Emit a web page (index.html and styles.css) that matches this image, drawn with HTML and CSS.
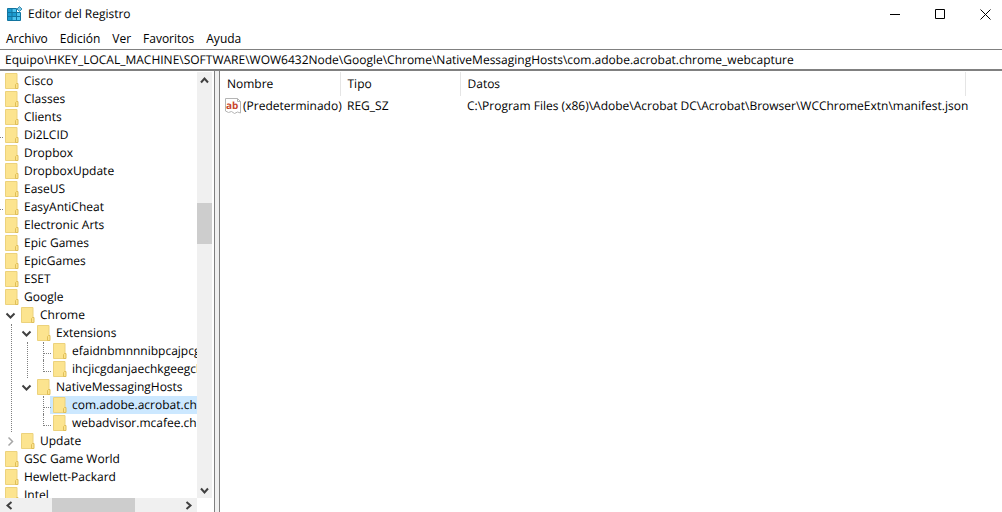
FILE: index.html
```html
<!DOCTYPE html>
<html lang="es">
<head>
    <meta charset="UTF-8">
    <meta name="viewport" content="width=device-width, initial-scale=1.0">
    <title>Editor del Registro</title>
    <link rel="stylesheet" href="styles.css">
</head>
<body>

    <svg class="defs" aria-hidden="true">
        <symbol id="folder" viewBox="0 0 14 16">
            <path d="M.5 .5h11.500v15h-11.500z" fill="#fce48f" stroke="#ecd27c"/>
            <path d="M10.500 15.500v-4l1-1h1.500v5z" fill="#fce48f" stroke="#e0bf58"/>
        </symbol>
        <symbol id="open" viewBox="0 0 11 11">
            <path d="M1.500 3.500l4 4 4-4" fill="none" stroke="#404040" stroke-width="2"/>
        </symbol>
        <symbol id="closed" viewBox="0 0 11 11">
            <path d="M3.500 1.500l4 4-4 4" fill="none" stroke="#a6a6a6" stroke-width="1.500"/>
        </symbol>
    </svg>

    <header class="titlebar">
        <svg class="app-icon" viewBox="0 0 16 16" aria-hidden="true">
            <path d="M.5 2.500h9v4h4v8h-13z" fill="#4cc3ee"/>
            <path d="M1 3h4v11h-4zM5 7h4v4h-4z" fill="#1c9bd0"/>
            <path d="M.5 2.500h9v4h4v8h-13zM5 2.500v12M9.500 6.500v8M.5 6.500h9M.5 10.500h13" fill="none" stroke="#12749f"/>
            <path d="M12.500 .5l2.500 2.500-2.500 2.500-2.500-2.500z" fill="#7cc6e2" stroke="#3b8fb5"/>
        </svg>
        <h1 class="title">Editor del Registro</h1>
        <div class="window-buttons">
            <button type="button" aria-label="Minimizar"><svg viewBox="0 0 11 11"><path d="M0 5.500h10"/></svg></button>
            <button type="button" aria-label="Maximizar"><svg viewBox="0 0 11 11"><path d="M.5 .5h9v9h-9z"/></svg></button>
            <button type="button" aria-label="Cerrar"><svg viewBox="0 0 11 11"><path d="M.5 .5l10 10M10.500 .5l-10 10"/></svg></button>
        </div>
    </header>

    <nav class="menu">
        <button type="button">Archivo</button>
        <button type="button">Edición</button>
        <button type="button">Ver</button>
        <button type="button">Favoritos</button>
        <button type="button">Ayuda</button>
    </nav>

    <input class="address" type="text" aria-label="Ruta" value="Equipo\HKEY_LOCAL_MACHINE\SOFTWARE\WOW6432Node\Google\Chrome\NativeMessagingHosts\com.adobe.acrobat.chrome_webcapture">

    <main class="panes">
        <section class="tree-pane">
            <div class="tree-view">
                <ul class="tree">
                    <li><a class="node" href="#"><svg><use href="#folder"/></svg><span>Cisco</span></a></li>
                    <li><a class="node" href="#"><svg><use href="#folder"/></svg><span>Classes</span></a></li>
                    <li><a class="node" href="#"><svg><use href="#folder"/></svg><span>Clients</span></a></li>
                    <li class="leaf"><a class="node" href="#"><svg><use href="#folder"/></svg><span>Di2LCID</span></a></li>
                    <li><a class="node" href="#"><svg><use href="#folder"/></svg><span>Dropbox</span></a></li>
                    <li><a class="node" href="#"><svg><use href="#folder"/></svg><span>DropboxUpdate</span></a></li>
                    <li><a class="node" href="#"><svg><use href="#folder"/></svg><span>EaseUS</span></a></li>
                    <li class="leaf"><a class="node" href="#"><svg><use href="#folder"/></svg><span>EasyAntiCheat</span></a></li>
                    <li><a class="node" href="#"><svg><use href="#folder"/></svg><span>Electronic Arts</span></a></li>
                    <li><a class="node" href="#"><svg><use href="#folder"/></svg><span>Epic Games</span></a></li>
                    <li><a class="node" href="#"><svg><use href="#folder"/></svg><span>EpicGames</span></a></li>
                    <li><a class="node" href="#"><svg><use href="#folder"/></svg><span>ESET</span></a></li>
                    <li><a class="node" href="#"><svg><use href="#folder"/></svg><span>Google</span></a>
                        <ul>
                            <li class="branch">
                                <button class="toggle" type="button" aria-label="Contraer"><svg><use href="#open"/></svg></button>
                                <a class="node" href="#"><svg><use href="#folder"/></svg><span>Chrome</span></a>
                                <ul>
                                    <li class="branch">
                                        <button class="toggle" type="button" aria-label="Contraer"><svg><use href="#open"/></svg></button>
                                        <a class="node" href="#"><svg><use href="#folder"/></svg><span>Extensions</span></a>
                                        <ul>
                                            <li class="leaf"><a class="node" href="#"><svg><use href="#folder"/></svg><span>efaidnbmnnnibpcajpcglclefindmkaj</span></a></li>
                                            <li class="leaf"><a class="node" href="#"><svg><use href="#folder"/></svg><span>ihcjicgdanjaechkgeegckofjjedodee</span></a></li>
                                        </ul>
                                    </li>
                                    <li>
                                        <button class="toggle" type="button" aria-label="Contraer"><svg><use href="#open"/></svg></button>
                                        <a class="node" href="#"><svg><use href="#folder"/></svg><span>NativeMessagingHosts</span></a>
                                        <ul>
                                            <li class="leaf"><a class="node selected" href="#"><svg><use href="#folder"/></svg><span>com.adobe.acrobat.chrome_webcapture</span></a></li>
                                            <li class="leaf"><a class="node" href="#"><svg><use href="#folder"/></svg><span>webadvisor.mcafee.chrome.extension</span></a></li>
                                        </ul>
                                    </li>
                                </ul>
                            </li>
                            <li>
                                <button class="toggle" type="button" aria-label="Expandir"><svg><use href="#closed"/></svg></button>
                                <a class="node" href="#"><svg><use href="#folder"/></svg><span>Update</span></a>
                            </li>
                        </ul>
                    </li>
                    <li><a class="node" href="#"><svg><use href="#folder"/></svg><span>GSC Game World</span></a></li>
                    <li><a class="node" href="#"><svg><use href="#folder"/></svg><span>Hewlett-Packard</span></a></li>
                    <li><a class="node" href="#"><svg><use href="#folder"/></svg><span>Intel</span></a></li>
                </ul>
            </div>
            <div class="scroll-y">
                <button type="button" aria-label="Subir"><svg viewBox="0 0 11 11"><path d="M2 7.500l3.500-4 3.500 4"/></svg></button>
                <div class="track"><div class="thumb"></div></div>
                <button type="button" aria-label="Bajar"><svg viewBox="0 0 11 11"><path d="M2 3.500l3.500 4 3.500-4"/></svg></button>
            </div>
            <div class="scroll-x">
                <button type="button" aria-label="Izquierda"><svg viewBox="0 0 11 11"><path d="M7.500 2l-4 3.500 4 3.500"/></svg></button>
                <div class="track"><div class="thumb"></div></div>
                <button type="button" aria-label="Derecha"><svg viewBox="0 0 11 11"><path d="M3.500 2l4 3.500-4 3.500"/></svg></button>
            </div>
        </section>

        <div class="splitter"></div>

        <section class="values-pane">
            <table class="values">
                <colgroup>
                    <col class="col-name">
                    <col class="col-type">
                    <col class="col-data">
                    <col>
                </colgroup>
                <thead>
                    <tr><th>Nombre</th><th>Tipo</th><th>Datos</th><td></td></tr>
                </thead>
                <tbody>
                    <tr>
                        <td>
                            <div class="value-name">
                                <svg class="value-icon" viewBox="0 0 16 16" aria-hidden="true">
                                    <path d="M.5 .5h12l3 3v11.500l-3-1-3 1.500-3-2-3 1-3-1.500z" fill="#fff" stroke="#b4b4b4"/>
                                    <path d="M12.500 .5v3h3" fill="none" stroke="#b4b4b4"/>
                                    <text x="1" y="11">ab</text>
                                </svg>
                                <span>(Predeterminado)</span>
                            </div>
                        </td>
                        <td>REG_SZ</td>
                        <td>C:\Program Files (x86)\Adobe\Acrobat DC\Acrobat\Browser\WCChromeExtn\manifest.json</td>
                        <td></td>
                    </tr>
                </tbody>
            </table>
        </section>
    </main>

</body>
</html>
```

FILE: styles.css
```css
* {
    box-sizing: border-box;
}
body {
    margin: 0;
    height: 100vh;
    display: flex;
    flex-direction: column;
    overflow: hidden;
    background-color: #fff;
    color: #000;
    font: 12px/18px "Open Sans", "Noto Sans", sans-serif;
    text-rendering: geometricPrecision;
}
button {
    padding: 0;
    border: none;
    background: none;
    color: inherit;
    font: inherit;
}
a {
    color: inherit;
    text-decoration: none;
}
.defs {
    position: absolute;
    width: 0;
    height: 0;
}

/* barra de titulo */
.titlebar {
    display: flex;
    align-items: center;
    height: 28px;
    padding-left: 7px;
}
.app-icon {
    width: 16px;
    height: 16px;
}
.title {
    margin: 0 auto 0 5px;
    font-size: 12px;
    font-weight: normal;
}
.window-buttons {
    display: flex;
    margin-right: -6px;
}
.window-buttons button {
    display: grid;
    place-items: center;
    width: 45px;
    height: 28px;
}
.window-buttons svg {
    width: 11px;
    height: 11px;
    fill: none;
    stroke: #000;
}

/* menu */
.menu {
    display: flex;
    gap: 12px;
    height: 21px;
    padding: 2px 6px;
}
.address {
    height: 22px;
    padding: 0 5px;
    border: solid #808080;
    border-width: 1px 0 2px;
    outline: none;
    color: inherit;
    font: inherit;
    text-rendering: inherit;
}

/* paneles */
.panes {
    display: flex;
    flex: 1;
    min-height: 0;
}
.tree-pane {
    display: grid;
    grid-template: 1fr 14px / 1fr 15px;
    width: 214px;
    padding: 1px 2px 0 0;
}
.tree-view {
    overflow: hidden;
    min-height: 0;
}
.tree, .tree ul {
    margin: 0;
    padding: 0;
    list-style: none;
}
.tree {
    margin-left: -11px;
}
.tree ul {
    padding-left: 16px;
}
.tree li {
    position: relative;
}
.node {
    display: flex;
    align-items: center;
    height: 18px;
    margin-left: 13px;
    padding-left: 3px;
    white-space: nowrap;
}
.node svg {
    flex: none;
    width: 14px;
    height: 16px;
    margin-right: 5px;
}
.selected {
    background-color: #cce8ff;
}
.toggle {
    position: absolute;
    top: 4px;
    left: 0;
    width: 11px;
    height: 11px;
}
.toggle svg {
    display: block;
    width: 11px;
    height: 11px;
}

/* lineas de puntos del arbol */
.branch::before {
    content: "";
    position: absolute;
    top: 18px;
    bottom: 0;
    left: 6px;
    border-left: 1px dotted #808080;
}
.leaf::before {
    content: "";
    position: absolute;
    top: 0;
    left: 6px;
    width: 7px;
    height: 11px;
    border: dotted #808080;
    border-width: 0 0 1px 1px;
}
.leaf:not(:last-child)::after {
    content: "";
    position: absolute;
    top: 11px;
    bottom: 0;
    left: 6px;
    border-left: 1px dotted #808080;
}

/* barras de desplazamiento */
.scroll-y, .scroll-x {
    display: flex;
    background-color: #f0f0f0;
}
.scroll-y {
    flex-direction: column;
}
.scroll-y button, .scroll-x button {
    display: grid;
    place-items: center;
    width: 15px;
    height: 16px;
}
.scroll-x button {
    width: 18px;
    height: 14px;
}
.scroll-y svg, .scroll-x svg {
    width: 11px;
    height: 11px;
    fill: none;
    stroke: #404040;
    stroke-width: 2;
}
.track {
    display: flex;
    flex: 1;
}
.scroll-y .track {
    flex-direction: column;
    padding-top: 115px;
}
.scroll-y .thumb {
    height: 41px;
    background-color: #cdcdcd;
}
.scroll-x .track {
    padding-left: 34px;
}
.scroll-x .thumb {
    width: 83px;
    background-color: #cdcdcd;
}
.splitter {
    width: 6px;
    border: solid #808080;
    border-width: 0 1px;
    background-color: #f0f0f0;
    cursor: col-resize;
}

/* lista de valores */
.values-pane {
    flex: 1;
    min-width: 0;
    padding-top: 1px;
    overflow: hidden;
}
.values {
    width: 100%;
    table-layout: fixed;
    border-collapse: collapse;
    white-space: nowrap;
}
.col-name, .col-type {
    width: 120px;
}
.col-data {
    width: 505px;
}
.values th {
    height: 24px;
    padding: 0 7px;
    border-right: 1px solid #e5e5e5;
    font-weight: normal;
    text-align: left;
}
.values td {
    padding: 0 7px;
}
.values tbody td {
    height: 19px;
}
.value-name {
    display: flex;
    align-items: center;
    gap: 2px;
    margin-left: -2px;
}
.value-icon {
    flex: none;
    width: 16px;
    height: 16px;
}
.value-icon text {
    fill: #c8452c;
    font: bold 10px "Open Sans", sans-serif;
}
```
